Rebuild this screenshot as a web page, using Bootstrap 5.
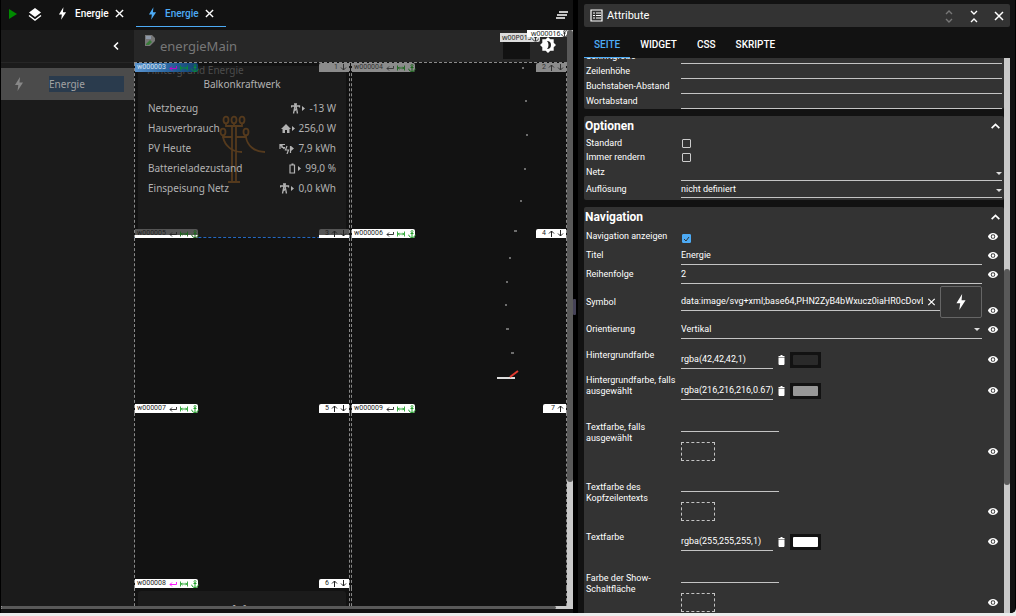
<!DOCTYPE html>
<html lang="de" data-bs-theme="dark">
<head>
<meta charset="utf-8">
<meta name="viewport" content="width=device-width, initial-scale=1">
<title>Energie – Editor</title>
<link href="https://cdn.jsdelivr.net/npm/bootstrap@5.3.0/dist/css/bootstrap.min.css" rel="stylesheet">
<style>
  body { font-family: Roboto, sans-serif; font-size: 10px; line-height: 11px; color: #fff; background: #ececec; padding-bottom: 3px; }
  button { background: none; border: 0; padding: 0; color: inherit; display: flex; align-items: center; justify-content: center; }
  svg { display: block; flex: none; }
  .app { background: #000; border-bottom-right-radius: 5px; padding: 0 1px; }
  .editor, .side { background: #121212; }
  .editor { min-width: 0; }
  .toolbar { height: 30px; padding: 0 4px 0 7px; flex: none; }
  .tools { gap: 11px; padding-bottom: 2px; margin-right: 4px; }
  .ptab { width: 90px; height: 27px; padding: 0 11px 0 12px; font-weight: 500; border-bottom: 1px solid transparent; }
  .ptab.active { color: #4dabf5; border-color: #4dabf5; }
  .ptab a { color: inherit; text-decoration: none; width: 34px; margin-left: 4px; }
  .ptab button { color: #fff; width: 12px; height: 12px; }
  .stage { min-height: 0; }
  .menu { width: 133px; background: #1b1b1b; }
  .menu-top { height: 33px; border-bottom: 1px solid #262626; padding-right: 14px; }
  .menu-item { height: 32px; margin-top: 5px; background: #4b4b4b; color: #a2a2a2; padding: 0 10px 0 12px; text-decoration: none; font: 10px/16px "Noto Sans", sans-serif; }
  .menu-item svg { color: #888; }
  .menu-item span { background: #2a3b4d; width: 75px; }
  .view-head { height: 32px; background: #272727; color: #777; font: 13px/16px "Noto Sans", sans-serif; padding: 0 10px; }
  .tag-a { right: 27px; top: 3px; width: 40px; background: #ddd !important; padding-left: 2px; }
  .tag-b { right: 0; top: 0; width: 40px; height: 7px !important; }
  .dark-box { right: 37px; top: 4px; width: 27px; height: 25px; background: #121212; }
  .mode { right: 11px; top: 7px; z-index: 4; }
  .widgets { display: grid; grid-template-columns: 1fr 1fr; grid-auto-rows: 175px; column-gap: 1px; border-top: 1px dashed #8a8a8a; min-height: 0; }
  .cell { border-left: 1px dashed #8a8a8a; border-right: 1px dashed #8a8a8a; }
  .cell-energy { border-bottom: 1px dashed #2468c0; }
  .tag { height: 9px; background: #fff; color: #222; font-size: 7px; line-height: 9px; border-radius: 0 2px 2px 0; z-index: 3; }
  .tag-id { width: 63px; left: 0; padding: 0 2px; gap: 3px; }
  .tag-no { width: 30px; right: 0; padding-right: 2px; border-radius: 2px 0 0 0; gap: 2px; }
  .tag-above { bottom: 100%; }
  .dimmed { background: #8b8b8b; color: #333; }
  .half { background: linear-gradient(#555 70%, #fff 70%); }
  .chosen { background: linear-gradient(90deg, #5b94cf, #2c68a3 50%, #12406e); color: #d5e2f0; }
  .energy { background: #1b1b1b; color: #b2b2b2; border-radius: 3px; margin: 3px 3px 0; font: 10px/20px "Noto Sans", sans-serif; padding: 0 10px; }
  .mast { left: 80px; top: 49px; }
  .behind { left: 12px; top: 0; color: #4c4c4c; font: 10px/15px "Noto Sans", sans-serif; z-index: 2; }
  .trace { right: 38px; top: 0; }
  .vbar { width: 6px; background: #c9c9c9; }
  .thumb { background: #595959; border-radius: 3px; }
  .hbar { height: 3px; background: #c9c9c9; margin-bottom: 4px; flex: none; }
  .divider { width: 5px; }
  .divider i { width: 3px; height: 16px; background: #454257; border-radius: 1px; }
  .side { width: 437px; padding: 4px 5px 0 6px; }
  .side-head { height: 23px; background: #333; border-radius: 2px; font-size: 11px; padding: 0 6px; }
  .side-tabs { height: 31px; font-weight: 500; }
  .side-tabs a { color: #fff; text-decoration: none; padding: 12px 10px 7px; border-bottom: 1px solid transparent; }
  .side-tabs a.active { color: #4dabf5; border-color: #4dabf5; }
  .scroller { min-height: 0; overflow: hidden; }
  .scrolled { margin-top: -9px; min-width: 0; gap: 7px; }
  .panel { background: #333; border-radius: 2px; }
  .panel-head { height: 20px; font-size: 12px; line-height: 20px; font-weight: 700; margin: 0; padding: 0 3px 0 1px; }
  .prop { display: flex; align-items: center; height: 19px; padding: 0 2px 0 2px; font-size: 9px; }
  .prop > label { width: 95px; flex: none; }
  .prop input[type=text], .prop select { background: transparent; color: #fff; border: 0; border-bottom: 1px solid #c4c4c4; border-radius: 0; padding: 0; outline: 0; min-width: 0; font-size: 9px; line-height: 11px; flex: 1 1 0; align-self: stretch; }
  .prop select { appearance: none; }
  .caret { right: 2px; top: 8px; border: 3px solid transparent; border-top-color: #ddd; border-bottom: 0; }
  .prop input[type=checkbox] { appearance: none; width: 9px; height: 9px; margin: 0 1px; border: 1px solid #ccc; border-radius: 1px; }
  .prop input[type=checkbox]:checked { background: #4dabf5; border-color: #4dabf5; }
  .tick { left: 2px; top: 2px; pointer-events: none; }
  .eye { width: 12px; height: 11px; margin-left: 5px; flex: none; }
  .with-eye { padding-right: 5px; }
  .h14 { height: 14px; } .h15 { height: 15px; } .h17 { height: 17px; }
  .symbol { height: 36px; }
  .symbol .field { height: 18px; border-bottom: 1px solid #c4c4c4; align-self: center; }
  .symbol .field input { border: 0 !important; }
  .pick { width: 42px; height: 32px; border: 1px solid #666; border-radius: 2px; }
  .colours { padding-top: 5px; }
  .colour { height: 31px; }
  .colour > label { padding-bottom: 9px; }
  .colour input[type=text] { flex: 0 0 92px; align-self: center; height: 19px; }
  .swatch { width: 31px; height: 16px; background: #121212; padding: 3px; }
  .swatch i { width: 25px; height: 10px; border-radius: 1px; }
  .unset { height: 60px; align-items: flex-start; }
  .unset > label { padding-top: 16px; }
  .unset input[type=text] { flex: none; width: 98px; height: 18px; margin-top: 8px; }
  .nocolour { width: 34px; height: 19px; border: 1px dashed #c4c4c4; margin-top: 10px; }
  .unset .eye { margin-top: 40px; }
</style>
</head>
<body class="vh-100 d-flex flex-column overflow-hidden">
<svg width="0" height="0" class="position-absolute" aria-hidden="true">
  <symbol id="bolt" viewBox="0 0 10 14"><path fill="currentColor" d="M6 0 1 8h3.300L3.500 14 9 5.500H5.500z"/></symbol>
  <symbol id="cross" viewBox="0 0 10 10"><path d="M1 1l8 8M9 1L1 9" fill="none" stroke="currentColor" stroke-width="1.500"/></symbol>
  <symbol id="eyeI" viewBox="0 0 24 24"><path fill="currentColor" d="M12 4.500C7 4.500 2.700 7.600 1 12c1.700 4.400 6 7.500 11 7.500s9.300-3.100 11-7.500c-1.700-4.400-6-7.500-11-7.500zM12 17a5 5 0 1 1 0-10 5 5 0 0 1 0 10zm0-8a3 3 0 1 0 0 6 3 3 0 0 0 0-6z"/></symbol>
  <symbol id="up" viewBox="0 0 10 7"><path d="M1.500 5.500L5 2l3.500 3.500" fill="none" stroke="currentColor" stroke-width="1.500"/></symbol>
  <symbol id="ret" viewBox="0 0 8 6"><path d="M7.500 1v2.500H1M3 1.500L1 3.500l2 2" fill="none" stroke="currentColor" stroke-width=".9"/></symbol>
  <symbol id="span" viewBox="0 0 8 6"><path d="M.5.500v5M7.500.500v5M1 3h6M2.500 1.800L1.300 3l1.200 1.200M5.500 1.800L6.700 3 5.500 4.200" fill="none" stroke="currentColor" stroke-width=".9"/></symbol>
  <symbol id="anch" viewBox="0 0 8 8"><path d="M4 2.500v5M2.500 3.500h3M.7 4.700C1 6.800 2.500 7.500 4 7.500s3-.7 3.300-2.800" fill="none" stroke="currentColor" stroke-width="1"/><circle cx="4" cy="1.500" r="1" fill="none" stroke="currentColor" stroke-width=".8"/></symbol>
  <symbol id="arrU" viewBox="0 0 7 7"><path d="M3.500 7V1M1 3.500L3.500 1 6 3.500" fill="none" stroke="currentColor"/></symbol>
  <symbol id="arrD" viewBox="0 0 7 7"><path d="M3.500 0v6M1 3.500L3.500 6 6 3.500" fill="none" stroke="currentColor"/></symbol>
  <symbol id="trash" viewBox="0 0 8 10"><path fill="currentColor" d="M1 1h2V0h2v1h2v1H1zM1 2.500h6V9L6.500 10h-5L1 9z"/></symbol>
  <symbol id="pylon" viewBox="0 0 14 11"><path d="M4.500.500L2.500 10.500M4.500.500L6.500 10.500M.5 4.500V3h8v1.500M3 1h3M3 8l3-2M3.300 5.500l3 2" fill="none" stroke="currentColor" stroke-width="1.300"/><path d="M11 3l3 2.500L11 8z" fill="currentColor"/></symbol>
</svg>

<div class="app d-flex flex-fill overflow-hidden">
  <main class="editor d-flex flex-column flex-fill">
    <header class="toolbar d-flex">
      <div class="tools d-flex">
        <button aria-label="Start"><svg width="9" height="10"><path d="M1 0l8 5-8 5z" fill="#008a00"/></svg></button>
        <button aria-label="Ebenen"><svg width="14" height="14" viewBox="0 0 14 14"><path d="M7 1l6 4.500L7 10 1 5.500z" fill="#fff"/><path d="M1 8.500L7 13l6-4.500" fill="none" stroke="#fff" stroke-width="1.400"/></svg></button>
      </div>
      <nav class="d-flex">
        <div class="ptab d-flex align-items-center justify-content-between"><svg width="9" height="13"><use href="#bolt"/></svg><a href="#">Energie</a><button aria-label="Schließen"><svg width="9" height="9"><use href="#cross"/></svg></button></div>
        <div class="ptab active d-flex align-items-center justify-content-between"><svg width="9" height="13"><use href="#bolt"/></svg><a href="#">Energie</a><button aria-label="Schließen"><svg width="9" height="9"><use href="#cross"/></svg></button></div>
      </nav>
      <button class="ms-auto" aria-label="Menü"><svg width="14" height="8"><path d="M4 1h9M2 4h10M1 7h9" stroke="#fff" stroke-width="1.500"/></svg></button>
    </header>

    <div class="stage d-flex flex-fill">
      <aside class="menu flex-shrink-0">
        <div class="menu-top d-flex justify-content-end"><button aria-label="Einklappen"><svg width="8" height="10"><path d="M6 1.500L2.500 5 6 8.500" fill="none" stroke="#fff" stroke-width="1.600"/></svg></button></div>
        <a href="#" class="menu-item d-flex align-items-center justify-content-between"><svg width="12" height="14"><use href="#bolt"/></svg><span>Energie</span></a>
      </aside>

      <section class="d-flex flex-column flex-fill overflow-hidden">
        <div class="view-head d-flex align-items-center position-relative flex-shrink-0">
          <svg width="12" height="13" class="me-1 align-self-start mt-1"><path d="M1 1h7l3 3v8H1z" fill="#777"/><path d="M2 10l4-4 2 2-3 3H2z" fill="#387a38"/><path d="M2 2h5v3H2z" fill="#8d98a8"/><path d="M12 6L5 13h7z" fill="#272727"/></svg>
          <span>energieMain</span>
          <div class="dark-box position-absolute"></div>
          <div class="tag tag-a position-absolute d-flex align-items-center">w00P015<svg width="7" height="8"><use href="#anch"/></svg></div>
          <div class="tag tag-b position-absolute d-flex align-items-center justify-content-between px-1">w000016<svg width="7" height="7"><use href="#anch"/></svg></div>
          <button class="mode position-absolute" aria-label="Design"><svg width="16" height="16" viewBox="0 0 16 16"><path d="M8 0l2.300 2.300H13.700V5.700L16 8l-2.300 2.300v3.400h-3.400L8 16l-2.300-2.300H2.300v-3.400L0 8l2.300-2.300V2.300h3.400z" fill="#fff"/><path d="M7 4a4 4 0 1 1 0 8c2-2 2-6 0-8z" fill="#222"/></svg></button>
        </div>

        <div class="widgets flex-fill position-relative">
          <div class="cell cell-energy position-relative d-flex flex-column">
            <div class="tag tag-id chosen position-absolute d-flex align-items-center top-0">w000003<svg width="8" height="6" color="#c0c"><use href="#ret"/></svg><svg width="8" height="6" color="#0a8a3a"><use href="#span"/></svg><svg width="8" height="8" color="#0a8a3a"><use href="#anch"/></svg></div>
            <div class="tag tag-no dimmed position-absolute d-flex align-items-center justify-content-end top-0">1 <svg width="7" height="7"><use href="#arrD"/></svg></div>
            <div class="behind position-absolute">Hintergrund Energie</div>
            <div class="energy position-relative flex-fill">
              <svg class="mast position-absolute" width="48" height="70" fill="none" stroke="#553a1d" stroke-width="1.800"><ellipse cx="8" cy="5" rx="2.500" ry="3.300"/><ellipse cx="16" cy="5" rx="2.500" ry="3.300"/><ellipse cx="24" cy="5" rx="2.500" ry="3.300"/><ellipse cx="5" cy="17" rx="2.500" ry="3.300"/><ellipse cx="28" cy="17" rx="2.500" ry="3.300"/><path d="M8 8v3h16V8M16 8v4M14 12v55M18 12v55M5 20v2h9M18 22h10v-2M10 67h12M5 22c2 9 9 15 19 15M28 22c1 8 8 15 19 15"/></svg>
              <div class="text-center pt-2">Balkonkraftwerk</div>
              <div class="d-flex align-items-center position-relative mt-1"><span>Netzbezug</span><svg class="ms-auto me-1" width="14" height="11"><use href="#pylon"/></svg><span>-13 W</span></div>
              <div class="d-flex align-items-center position-relative"><span>Hausverbrauch</span><svg class="ms-auto me-1" width="14" height="11" fill="currentColor"><path d="M5 1l5 5H8.500v4H6V7H4v3H1.500V6H0zM11 3l3 2.500L11 8z"/></svg><span>256,0 W</span></div>
              <div class="d-flex align-items-center position-relative"><span>PV Heute</span><svg class="ms-auto me-1" width="15" height="11" fill="none" stroke="currentColor" stroke-width="1.200"><path d="M1 6V1.500h5M1.500 2l4 4M3 1.500v3h3M8 3L6.500 7h3L8 11M11.500 3v7"/><path d="M12 3l3 2.500L12 8z" fill="currentColor" stroke="none"/></svg><span>7,9 kWh</span></div>
              <div class="d-flex align-items-center position-relative"><span>Batterieladezustand</span><svg class="ms-auto me-1" width="14" height="11" fill="none" stroke="currentColor" stroke-width="1.200"><path d="M3 2h4.500v8H3zM4.500 1.200h2"/><path d="M11 3l3 2.500L11 8z" fill="currentColor" stroke="none"/></svg><span>99,0 %</span></div>
              <div class="d-flex align-items-center position-relative"><span>Einspeisung Netz</span><svg class="ms-auto me-1" width="14" height="11"><use href="#pylon"/></svg><span>0,0 kWh</span></div>
            </div>
          </div>

          <div class="cell position-relative">
            <div class="tag tag-id dimmed position-absolute d-flex align-items-center top-0">w000004<svg width="8" height="6"><use href="#ret"/></svg><svg width="8" height="6" color="#1b651b"><use href="#span"/></svg><svg width="8" height="8" color="#1b651b"><use href="#anch"/></svg></div>
            <div class="tag tag-no dimmed position-absolute d-flex align-items-center justify-content-end top-0">2 <svg width="7" height="7"><use href="#arrU"/></svg><svg width="7" height="7"><use href="#arrD"/></svg></div>
            <svg class="trace position-absolute" width="40" height="330" stroke="#c8c8c8" stroke-width="1.200"><path d="M34 5h2M37 38h2M38 72h2M36 106h2M32 138h2M26 168h3M21 195h2M18 219h2M17 242h2M18 266h3M23 290h3"/><path d="M9 315h18" stroke="#ddd" stroke-width="2"/><path d="M22 314l8-6" stroke="#e33a2f" stroke-width="2"/></svg>
          </div>

          <div class="cell position-relative">
            <div class="tag tag-id tag-above half position-absolute d-flex align-items-center">w000005<svg width="8" height="6"><use href="#ret"/></svg><svg width="8" height="6" color="#1b651b"><use href="#span"/></svg><svg width="8" height="8" color="#1b651b"><use href="#anch"/></svg></div>
            <div class="tag tag-no tag-above half position-absolute d-flex align-items-center justify-content-end">3 <svg width="7" height="7"><use href="#arrU"/></svg><svg width="7" height="7"><use href="#arrD"/></svg></div>
          </div>
          <div class="cell position-relative">
            <div class="tag tag-id tag-above position-absolute d-flex align-items-center">w000006<svg width="8" height="6"><use href="#ret"/></svg><svg width="8" height="6" color="#22a02a"><use href="#span"/></svg><svg width="8" height="8" color="#22a02a"><use href="#anch"/></svg></div>
            <div class="tag tag-no tag-above position-absolute d-flex align-items-center justify-content-end">4 <svg width="7" height="7"><use href="#arrU"/></svg><svg width="7" height="7"><use href="#arrD"/></svg></div>
          </div>
          <div class="cell position-relative">
            <div class="tag tag-id tag-above position-absolute d-flex align-items-center">w000007<svg width="8" height="6"><use href="#ret"/></svg><svg width="8" height="6" color="#22a02a"><use href="#span"/></svg><svg width="8" height="8" color="#22a02a"><use href="#anch"/></svg></div>
            <div class="tag tag-no tag-above position-absolute d-flex align-items-center justify-content-end">5 <svg width="7" height="7"><use href="#arrU"/></svg><svg width="7" height="7"><use href="#arrD"/></svg></div>
          </div>
          <div class="cell position-relative">
            <div class="tag tag-id tag-above position-absolute d-flex align-items-center">w000009<svg width="8" height="6"><use href="#ret"/></svg><svg width="8" height="6" color="#22a02a"><use href="#span"/></svg><svg width="8" height="8" color="#22a02a"><use href="#anch"/></svg></div>
            <div class="tag tag-no tag-above position-absolute d-flex align-items-center justify-content-end w-auto ps-2">7 <svg width="7" height="7"><use href="#arrU"/></svg></div>
          </div>
          <div class="cell position-relative">
            <div class="tag tag-id tag-above position-absolute d-flex align-items-center">w000008<svg width="8" height="6" color="#f0f"><use href="#ret"/></svg><svg width="8" height="6" color="#22a02a"><use href="#span"/></svg><svg width="8" height="8" color="#22a02a"><use href="#anch"/></svg></div>
            <div class="tag tag-no tag-above position-absolute d-flex align-items-center justify-content-end">6 <svg width="7" height="7"><use href="#arrU"/></svg><svg width="7" height="7"><use href="#arrD"/></svg></div>
            <div class="energy text-center pt-2">Info</div>
          </div>
          <div class="cell"></div>
        </div>
      </section>
      <div class="vbar flex-shrink-0"><div class="thumb" style="height:78.500%"></div></div>
    </div>
    <div class="hbar"><div class="thumb h-100" style="width:97%"></div></div>
  </main>

  <div class="divider d-flex align-items-center flex-shrink-0"><i></i></div>

  <aside class="side d-flex flex-column flex-shrink-0">
    <header class="side-head d-flex align-items-center flex-shrink-0">
      <svg width="13" height="13" class="me-1" fill="none" stroke="#fff"><path d="M1 1h11v11H1z" stroke-width="1.200"/><path d="M3 4h2M6 4h5M3 6.500h2M6 6.500h5M3 9h2M6 9h5"/></svg>
      <span>Attribute</span>
      <div class="ms-auto d-flex" style="gap:15px">
        <button aria-label="Alle öffnen"><svg width="10" height="14" fill="none" stroke="#777" stroke-width="1.400"><path d="M2 5l3-3 3 3M2 10l3 3 3-3"/></svg></button>
        <button aria-label="Alle schließen"><svg width="10" height="14" fill="none" stroke="#fff" stroke-width="1.400"><path d="M2 2l3 3 3-3M2 13l3-3 3 3"/></svg></button>
        <button aria-label="Schließen"><svg width="10" height="10"><use href="#cross"/></svg></button>
      </div>
    </header>
    <nav class="side-tabs d-flex flex-shrink-0"><a href="#" class="active">SEITE</a><a href="#">WIDGET</a><a href="#">CSS</a><a href="#">SKRIPTE</a></nav>

    <div class="scroller d-flex flex-fill">
      <form class="scrolled d-flex flex-column flex-fill">
        <section class="panel">
          <div class="prop h15"><label for="a1">Schriftgröße</label><input type="text" id="a1"></div>
          <div class="prop h15"><label for="a2">Zeilenhöhe</label><input type="text" id="a2"></div>
          <div class="prop h15"><label for="a3">Buchstaben-Abstand</label><input type="text" id="a3"></div>
          <div class="prop h15"><label for="a4">Wortabstand</label><input type="text" id="a4"></div>
        </section>

        <section class="panel" style="padding-bottom:2px">
          <h2 class="panel-head d-flex justify-content-between">Optionen<button type="button" aria-label="Einklappen"><svg width="11" height="8"><use href="#up"/></svg></button></h2>
          <div class="prop h14"><label for="b1">Standard</label><input type="checkbox" id="b1"></div>
          <div class="prop h14"><label for="b2">Immer rendern</label><input type="checkbox" id="b2"></div>
          <div class="prop h17 position-relative"><label for="b3">Netz</label><select id="b3"><option></option></select><i class="caret position-absolute"></i></div>
          <div class="prop h17 position-relative"><label for="b4">Auflösung</label><select id="b4"><option>nicht definiert</option></select><i class="caret position-absolute"></i></div>
        </section>

        <section class="panel">
          <h2 class="panel-head d-flex justify-content-between">Navigation<button type="button" aria-label="Einklappen"><svg width="11" height="8"><use href="#up"/></svg></button></h2>
          <div class="prop with-eye"><label for="c1">Navigation anzeigen</label><span class="position-relative me-auto pt-1"><input type="checkbox" id="c1" checked class="d-block"><svg class="tick position-absolute mt-1" width="7" height="6"><path d="M1 3l2 2 3-4" fill="none" stroke="#333"/></svg></span><svg class="eye"><use href="#eyeI"/></svg></div>
          <div class="prop with-eye"><label for="c2">Titel</label><input type="text" id="c2" value="Energie"><svg class="eye"><use href="#eyeI"/></svg></div>
          <div class="prop with-eye"><label for="c3">Reihenfolge</label><input type="text" id="c3" value="2"><svg class="eye"><use href="#eyeI"/></svg></div>
          <div class="prop with-eye symbol"><label for="c4">Symbol</label>
            <div class="field d-flex align-items-center flex-fill"><input type="text" id="c4" value="data:image/svg+xml;base64,PHN2ZyB4bWxucz0iaHR0cDovL3d3dy53My5vcmcvMjAwMC9zdmciIHdpZHRo"><button type="button" class="mx-1" aria-label="Leeren"><svg width="9" height="8"><use href="#cross"/></svg></button></div>
            <button type="button" class="pick" aria-label="Symbol wählen"><svg width="12" height="16"><use href="#bolt"/></svg></button><svg class="eye align-self-end mb-1"><use href="#eyeI"/></svg></div>
          <div class="prop with-eye"><label for="c5">Orientierung</label><div class="d-flex flex-fill align-self-stretch position-relative"><select id="c5"><option>Vertikal</option></select><i class="caret position-absolute"></i></div><svg class="eye"><use href="#eyeI"/></svg></div>
          <div class="colours">
            <div class="prop with-eye colour"><label for="d1">Hintergrundfarbe</label><input type="text" id="d1" value="rgba(42,42,42,1)"><button type="button" class="mx-1" aria-label="Löschen"><svg width="9" height="10"><use href="#trash"/></svg></button><button type="button" class="swatch" aria-label="Farbe"><i style="background:#2a2a2a"></i></button><svg class="eye ms-auto"><use href="#eyeI"/></svg></div>
            <div class="prop with-eye colour"><label for="d2">Hintergrundfarbe, falls ausgewählt</label><input type="text" id="d2" value="rgba(216,216,216,0.67)"><button type="button" class="mx-1" aria-label="Löschen"><svg width="9" height="10"><use href="#trash"/></svg></button><button type="button" class="swatch" aria-label="Farbe"><i style="background:#979797"></i></button><svg class="eye ms-auto"><use href="#eyeI"/></svg></div>
            <div class="prop with-eye unset"><label for="d3">Textfarbe, falls<br>ausgewählt</label><div><input type="text" id="d3" class="d-block"><button type="button" class="nocolour" aria-label="Farbe"></button></div><svg class="eye ms-auto"><use href="#eyeI"/></svg></div>
            <div class="prop with-eye unset"><label for="d4">Textfarbe des<br>Kopfzeilentexts</label><div><input type="text" id="d4" class="d-block"><button type="button" class="nocolour" aria-label="Farbe"></button></div><svg class="eye ms-auto"><use href="#eyeI"/></svg></div>
            <div class="prop with-eye colour"><label for="d5">Textfarbe</label><input type="text" id="d5" value="rgba(255,255,255,1)"><button type="button" class="mx-1" aria-label="Löschen"><svg width="9" height="10"><use href="#trash"/></svg></button><button type="button" class="swatch" aria-label="Farbe"><i style="background:#fff"></i></button><svg class="eye ms-auto"><use href="#eyeI"/></svg></div>
            <div class="prop with-eye unset"><label for="d6">Farbe der Show-<br>Schaltfläche</label><div><input type="text" id="d6" class="d-block"><button type="button" class="nocolour" aria-label="Farbe"></button></div><svg class="eye ms-auto"><use href="#eyeI"/></svg></div>
          </div>
        </section>
      </form>
      <div class="vbar d-flex flex-column flex-shrink-0"><div style="height:38%"></div><div class="thumb" style="height:39%"></div></div>
    </div>
  </aside>
</div>
<script src="https://cdn.jsdelivr.net/npm/bootstrap@5.3.0/dist/js/bootstrap.bundle.min.js"></script>
</body>
</html>
